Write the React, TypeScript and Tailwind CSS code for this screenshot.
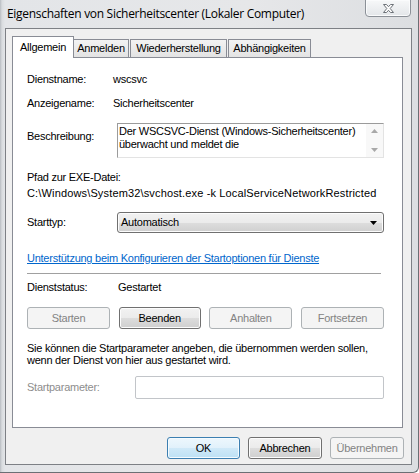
import React from 'react';

const sans = "font-['Liberation_Sans',Arial,sans-serif] text-[11px] leading-[13px] tracking-[-0.25px]";

function Btn({ label, disabled, w = 'w-[83px]' }: { label: string; disabled?: boolean; w?: string }) {
  return disabled ? (
    <div className={`${w} h-[22px] flex items-center justify-center rounded-[3px] border border-[#adb2b5] bg-[#f4f4f4] text-[#838383]`}>{label}</div>
  ) : (
    <div className={`${w} h-[22px] flex items-center justify-center rounded-[3px] border border-[#707070] bg-[linear-gradient(#f2f2f2_0%,#ebebeb_50%,#dddddd_51%,#cfcfcf_100%)] text-black shadow-[inset_0_0_0_1px_#fcfcfc]`}>{label}</div>
  );
}

function Tab({ label, active, w }: { label: string; active?: boolean; w: string }) {
  if (active) {
    return (
      <div className={`${w} h-[22px] -mb-px relative z-10 flex items-start justify-center pt-[4px] bg-white border border-b-0 border-[#898c95] text-black`}>
        {label}
      </div>
    );
  }
  return (
    <div className={`${w} h-[18px] flex items-start justify-center pt-[2px] bg-[linear-gradient(#f3f3f3,#e3e3e3)] border border-b-0 border-[#898c95] text-black`}>
      {label}
    </div>
  );
}

export default function App() {
  return (
    <div className={`w-[419px] h-[473px] overflow-hidden ${sans} text-black`}>
      <div className="w-[419px] h-[473px] flex flex-col pl-[5px] pr-[6px] pb-[7px] border-r border-b border-[#6b6f74] rounded-br-[6px] bg-[linear-gradient(90deg,#b8bcc1_0px,#d9dcdf_2px,#e3e5e8_5px,#e6e7e9_60%,#dcdee1_100%)]">
        {/* title bar */}
        <div className="h-[28px] flex items-start justify-between">
          <div className="pt-[6px] pl-[2px] font-['Open_Sans','Noto_Sans',sans-serif] text-[12px] leading-[16px] tracking-[-0.3px] text-black">
            Eigenschaften von Sicherheitscenter (Lokaler Computer)
          </div>
          <div className="-mt-px mr-px w-[46px] h-[18px] flex items-center justify-center rounded-b-[4px] border border-[#8b9097] bg-[linear-gradient(#f7f8f9,#e3e6e9)] shadow-[inset_0_0_0_1px_#fafbfc]">
            <svg width="13" height="11" viewBox="0 0 13 11">
              <path d="M1.5 1.5h3l2 2.2 2-2.2h3l-3.3 4 3.3 4h-3l-2-2.2-2 2.2h-3l3.3-4z" fill="#fdfdfd" stroke="#6d7278" strokeWidth="1" strokeLinejoin="round" />
            </svg>
          </div>
        </div>

        {/* client area */}
        <div className="flex-1 flex flex-col border border-[#7d8085] bg-[#f0f0f0] pl-[6px] pr-[8px] pt-[7px]">
          <div className="flex items-end h-[21px] gap-[1px]">
            <Tab label="Allgemein" active w="w-[62px]" />
            <div className="-ml-[2px]">
              <Tab label="Anmelden" w="w-[56px]" />
            </div>
            <Tab label="Wiederherstellung" w="w-[97px]" />
            <Tab label="Abhängigkeiten" w="w-[83px]" />
          </div>

          <div className="h-[371px] border border-[#898c95] bg-white flex flex-col pl-[14px] pr-[18px] pt-[15px]">
            <div className="flex h-[13px]">
              <div className="w-[86px]">Dienstname:</div>
              <div>wscsvc</div>
            </div>
            <div className="flex h-[13px] mt-[11px]">
              <div className="w-[86px]">Anzeigename:</div>
              <div>Sicherheitscenter</div>
            </div>
            <div className="flex mt-[13px]">
              <div className="w-[90px] pt-[7px]">Beschreibung:</div>
              <div className="flex-1 h-[35px] flex border border-[#9b9b9b] border-r-[#e3e3e3] border-b-[#e3e3e3] bg-white">
                <div className="flex-1 pl-[1px] pt-px leading-[13px]">
                  Der WSCSVC-Dienst (Windows-Sicherheitscenter) überwacht und meldet die
                </div>
                <div className="w-[17px] flex flex-col items-center justify-between py-[5px] bg-[#f8f8f8]">
                  <svg width="7" height="4" viewBox="0 0 7 4"><path d="M0 4L3.5 0 7 4z" fill="#a8a8a8" /></svg>
                  <svg width="7" height="4" viewBox="0 0 7 4"><path d="M0 0h7L3.5 4z" fill="#a8a8a8" /></svg>
                </div>
              </div>
            </div>
            <div className="mt-[13px] h-[13px]">Pfad zur EXE-Datei:</div>
            <div className="mt-[3px] h-[13px] whitespace-nowrap tracking-[0.15px]">C:\Windows\System32\svchost.exe -k LocalServiceNetworkRestricted</div>
            <div className="flex items-center mt-[12px]">
              <div className="w-[90px]">Starttyp:</div>
              <div className="flex-1 h-[21px] flex items-center justify-between pl-[3px] pr-[6px] rounded-[3px] border border-[#707070] bg-[linear-gradient(#f2f2f2_0%,#ebebeb_50%,#dddddd_51%,#cfcfcf_100%)] shadow-[inset_0_0_0_1px_#fcfcfc]">
                <span>Automatisch</span>
                <svg width="7" height="4" viewBox="0 0 7 4"><path d="M0 0h7L3.5 4z" fill="#000" /></svg>
              </div>
            </div>
            <div className="mt-[19px] h-[13px] text-[#0066cc] underline whitespace-nowrap">
              Unterstützung beim Konfigurieren der Startoptionen für Dienste
            </div>
            <div className="mt-[8px] h-px w-[354px] bg-[#a0a0a0]" />
            <div className="flex h-[13px] mt-[7px]">
              <div className="w-[91px]">Dienststatus:</div>
              <div>Gestartet</div>
            </div>
            <div className="flex justify-between mt-[13px]">
              <Btn label="Starten" disabled />
              <Btn label="Beenden" w="w-[82px]" />
              <Btn label="Anhalten" disabled />
              <Btn label="Fortsetzen" disabled />
            </div>
            <div className="mt-[13px] leading-[12px]">
              Sie können die Startparameter angeben, die übernommen werden sollen,
              <br />
              wenn der Dienst von hier aus gestartet wird.
            </div>
            <div className="flex items-center mt-[10px]">
              <div className="w-[108px] text-[#8d8d8d]">Startparameter:</div>
              <div className="flex-1 h-[23px] rounded-[2px] border border-[#c2c5c9] bg-white" />
            </div>
          </div>

          <div className="flex justify-end gap-[8px] mt-[9px] -mr-[1px]">
            <div className="w-[73px] h-[22px] flex items-center justify-center rounded-[3px] border border-[#3c7fb1] bg-[linear-gradient(#edf7fd_0%,#e1f1fb_50%,#cfe9f8_51%,#bde1f5_100%)] shadow-[inset_0_0_0_1px_#f4fbff]">OK</div>
            <Btn label="Abbrechen" w="w-[74px]" />
            <Btn label="Übernehmen" disabled w="w-[74px]" />
          </div>
        </div>
      </div>
    </div>
  );
}
